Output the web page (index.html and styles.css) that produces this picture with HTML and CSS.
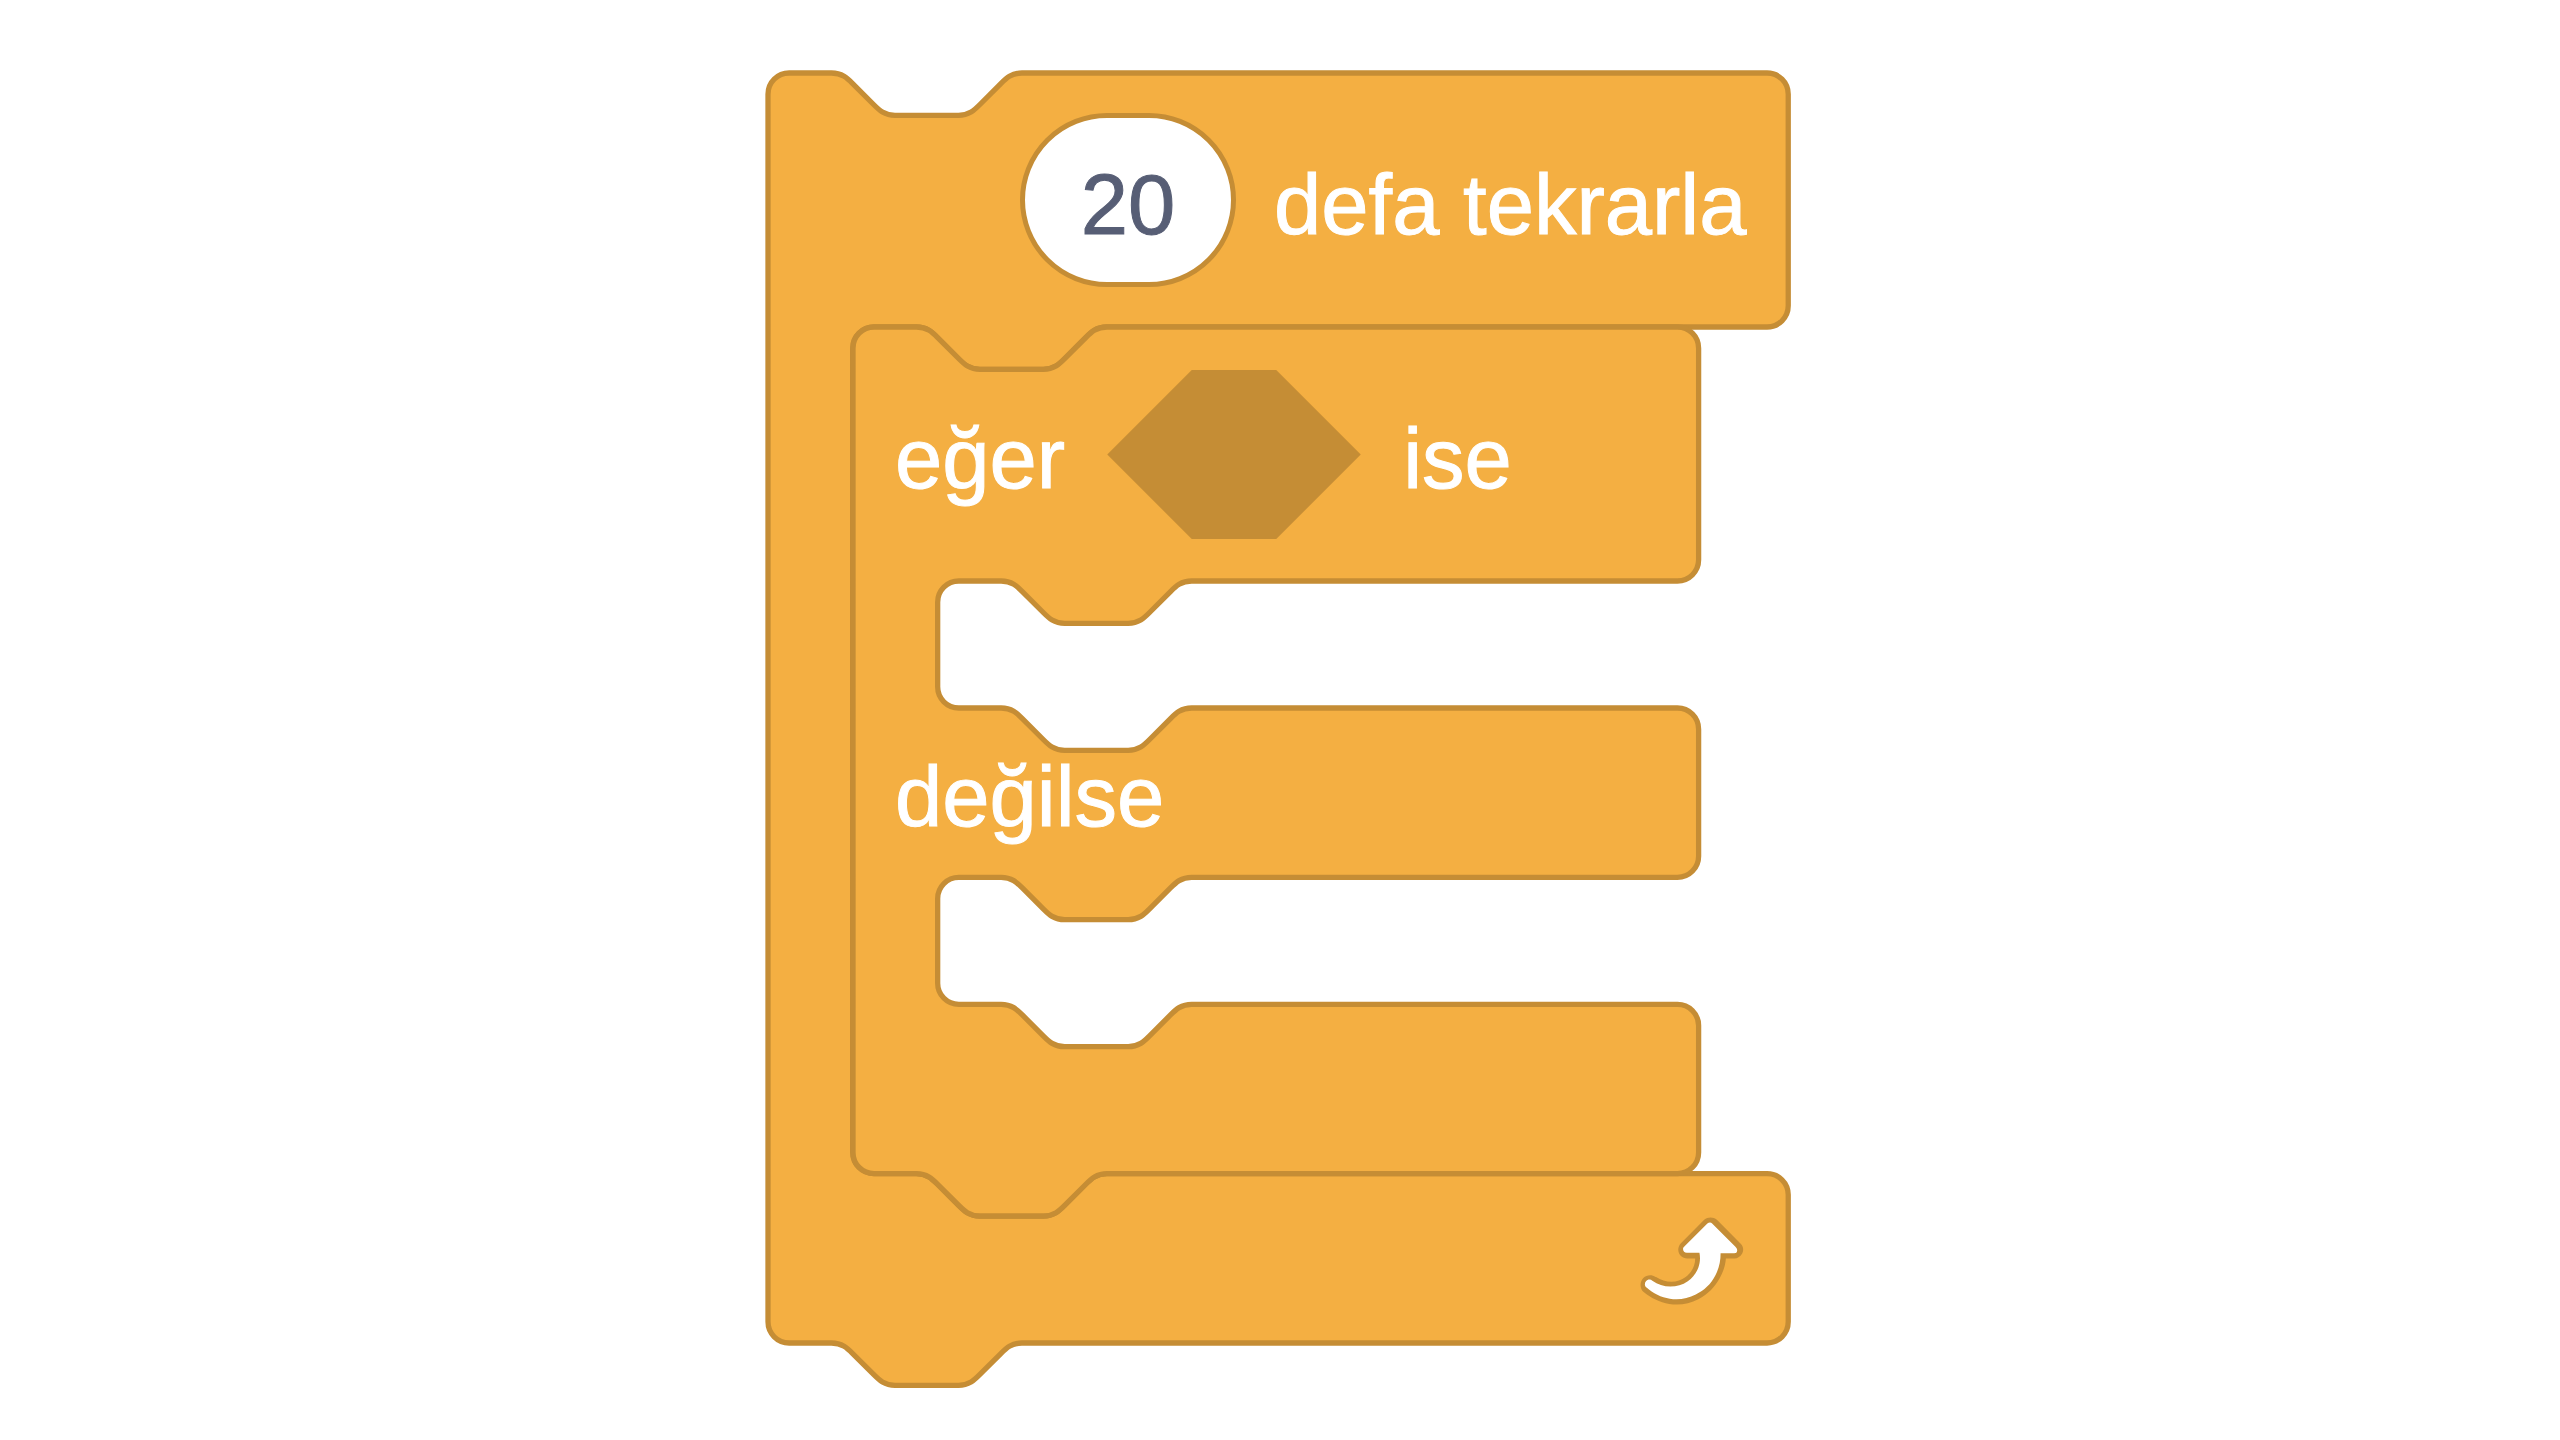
FILE: index.html
```html
<!DOCTYPE html>
<html lang="tr">
<head>
<meta charset="utf-8">
<meta name="viewport" content="width=device-width, initial-scale=1">
<title>Kod blokları</title>
<link rel="stylesheet" href="styles.css">
</head>
<body>
<main class="workspace">
  <section class="block block-repeat">
    <svg class="shape shape-repeat" viewBox="0 0 192 248" aria-hidden="true">
      <path d="M0,4A4,4 0 0,1 4,0H12c2,0 3,1 4,2l4,4c1,1 2,2 4,2h12c2,0 3,-1 4,-2l4,-4c1,-1 2,-2 4,-2H188.8a4,4 0 0,1 4,4v40a4,4 0 0,1 -4,4H64c-2,0 -3,1 -4,2l-4,4c-1,1 -2,2 -4,2h-12c-2,0 -3,-1 -4,-2l-4,-4c-1,-1 -2,-2 -4,-2h-8a4,4 0 0,0 -4,4v152a4,4 0 0,0 4,4h8c2,0 3,1 4,2l4,4c1,1 2,2 4,2h12c2,0 3,-1 4,-2l4,-4c1,-1 2,-2 4,-2H188.8a4,4 0 0,1 4,4v24a4,4 0 0,1 -4,4H48c-2,0 -3,1 -4,2l-4,4c-1,1 -2,2 -4,2h-12c-2,0 -3,-1 -4,-2l-4,-4c-1,-1 -2,-2 -4,-2H4a4,4 0 0,1 -4,-4z"/>
    </svg>
    <div class="row row-tall row-repeat">
      <input class="number" id="count" type="text" inputmode="numeric" value="20">
      <label class="label" for="count">defa tekrarla</label>
    </div>
    <div class="body">
      <section class="block block-if">
        <svg class="shape shape-if" viewBox="0 0 192 168" aria-hidden="true">
          <path d="M0,4A4,4 0 0,1 4,0H12c2,0 3,1 4,2l4,4c1,1 2,2 4,2h12c2,0 3,-1 4,-2l4,-4c1,-1 2,-2 4,-2H155.8a4,4 0 0,1 4,4v40a4,4 0 0,1 -4,4H64c-2,0 -3,1 -4,2l-4,4c-1,1 -2,2 -4,2h-12c-2,0 -3,-1 -4,-2l-4,-4c-1,-1 -2,-2 -4,-2h-8a4,4 0 0,0 -4,4v16a4,4 0 0,0 4,4h8c2,0 3,1 4,2l4,4c1,1 2,2 4,2h12c2,0 3,-1 4,-2l4,-4c1,-1 2,-2 4,-2H155.8a4,4 0 0,1 4,4v24a4,4 0 0,1 -4,4H64c-2,0 -3,1 -4,2l-4,4c-1,1 -2,2 -4,2h-12c-2,0 -3,-1 -4,-2l-4,-4c-1,-1 -2,-2 -4,-2h-8a4,4 0 0,0 -4,4v16a4,4 0 0,0 4,4h8c2,0 3,1 4,2l4,4c1,1 2,2 4,2h12c2,0 3,-1 4,-2l4,-4c1,-1 2,-2 4,-2H155.8a4,4 0 0,1 4,4v24a4,4 0 0,1 -4,4H48c-2,0 -3,1 -4,2l-4,4c-1,1 -2,2 -4,2h-12c-2,0 -3,-1 -4,-2l-4,-4c-1,-1 -2,-2 -4,-2H4a4,4 0 0,1 -4,-4z"/>
        </svg>
        <div class="row row-tall">
          <span class="label">eğer</span>
          <svg class="condition" viewBox="0 0 48 32" aria-hidden="true"><path d="M16,0H32L48,16L32,32H16L0,16z"/></svg>
          <span class="label">ise</span>
        </div>
        <div class="mouth"></div>
        <div class="row">
          <span class="label">değilse</span>
        </div>
        <div class="mouth"></div>
        <div class="row"></div>
      </section>
    </div>
    <div class="row row-end">
      <svg class="loop" viewBox="0 0 24 24" aria-hidden="true">
        <path class="loop-edge" d="M23.3,11c-0.3,0.6-0.9,1-1.5,1h-1.6c-0.1,1.3-0.5,2.5-1.1,3.6c-0.9,1.7-2.3,3.2-4.1,4.1c-1.7,0.9-3.6,1.2-5.5,0.9c-1.8-0.3-3.5-1.1-4.9-2.3c-0.7-0.7-0.7-1.9,0-2.6c0.6-0.6,1.6-0.7,2.3-0.2H7c0.9,0.6,1.9,0.9,2.9,0.9s1.9-0.3,2.7-0.9c1.1-0.8,1.8-2.1,1.8-3.5h-1.5c-0.9,0-1.7-0.7-1.7-1.7c0-0.4,0.2-0.9,0.5-1.2l4.4-4.4c0.7-0.6,1.7-0.6,2.4,0L23,9.2C23.5,9.7,23.6,10.4,23.3,11z"/>
        <path class="loop-arrow" d="M21.8,11h-2.6c0,1.5-0.3,2.9-1,4.2c-0.8,1.6-2.1,2.8-3.7,3.6c-1.5,0.8-3.3,1.1-4.9,0.8c-1.6-0.2-3.2-1-4.4-2.1c-0.4-0.3-0.4-0.9-0.1-1.2c0.3-0.4,0.9-0.4,1.2-0.1l0,0c1,0.7,2.2,1.1,3.4,1.1s2.3-0.3,3.3-1c0.9-0.6,1.6-1.5,2-2.6c0.3-0.9,0.4-1.8,0.2-2.8h-2.4c-0.4,0-0.7-0.3-0.7-0.7c0-0.2,0.1-0.3,0.2-0.4l4.4-4.4c0.3-0.3,0.7-0.3,0.9,0L22,9.8c0.3,0.3,0.4,0.6,0.3,0.9S22,11,21.8,11z"/>
      </svg>
    </div>
  </section>
</main>
</body>
</html>
```
FILE: styles.css
```css
:root {
  --control: #f4af42;
  --control-edge: #c58d35;
  --ink: #575e75;
}

* {
  box-sizing: border-box;
}

body {
  margin: 0;
  background: #fff;
  color: #fff;
  font: 85px/96px "Liberation Sans", Arial, sans-serif;
}

.workspace {
  display: flex;
  justify-content: center;
  padding: 73px 16px 48px;
}

.block {
  position: relative;
  display: flex;
  flex-direction: column;
}

.block-repeat {
  flex: none;
  width: 1024px;
}

/* The outline lies behind the rows of its block. */
.shape {
  position: absolute;
  top: 0;
  left: 0;
  width: 1016px;
  overflow: visible;
  fill: var(--control);
  stroke: var(--control-edge);
  stroke-width: 1;
}

.row {
  position: relative;
  display: flex;
  align-items: center;
  gap: 42px;
  height: 169px;
  padding: 0 42px;
}

.row-tall {
  height: 254px;
}

.row-repeat {
  gap: 38px;
  padding-left: 252px;
}

.row-end {
  justify-content: flex-end;
  padding: 2px 46px 0;
}

.body {
  padding-left: 85px;
}

.mouth {
  height: 127px;
}

.label {
  padding-top: 9px;
  white-space: nowrap;
  -webkit-text-stroke: 1px currentColor;
}

.number {
  width: 216px;
  height: 174px;
  padding: 9px 0 0;
  border: 5px solid var(--control-edge);
  border-radius: 87px;
  background: #fff;
  color: var(--ink);
  font: inherit;
  text-align: center;
  -webkit-text-stroke: 1px currentColor;
}

.condition {
  flex: none;
  width: 254px;
  height: 169px;
  fill: var(--control-edge);
}

.loop {
  width: 127px;
  height: 127px;
}

.loop-edge {
  fill: var(--control-edge);
}

.loop-arrow {
  fill: #fff;
}
```
